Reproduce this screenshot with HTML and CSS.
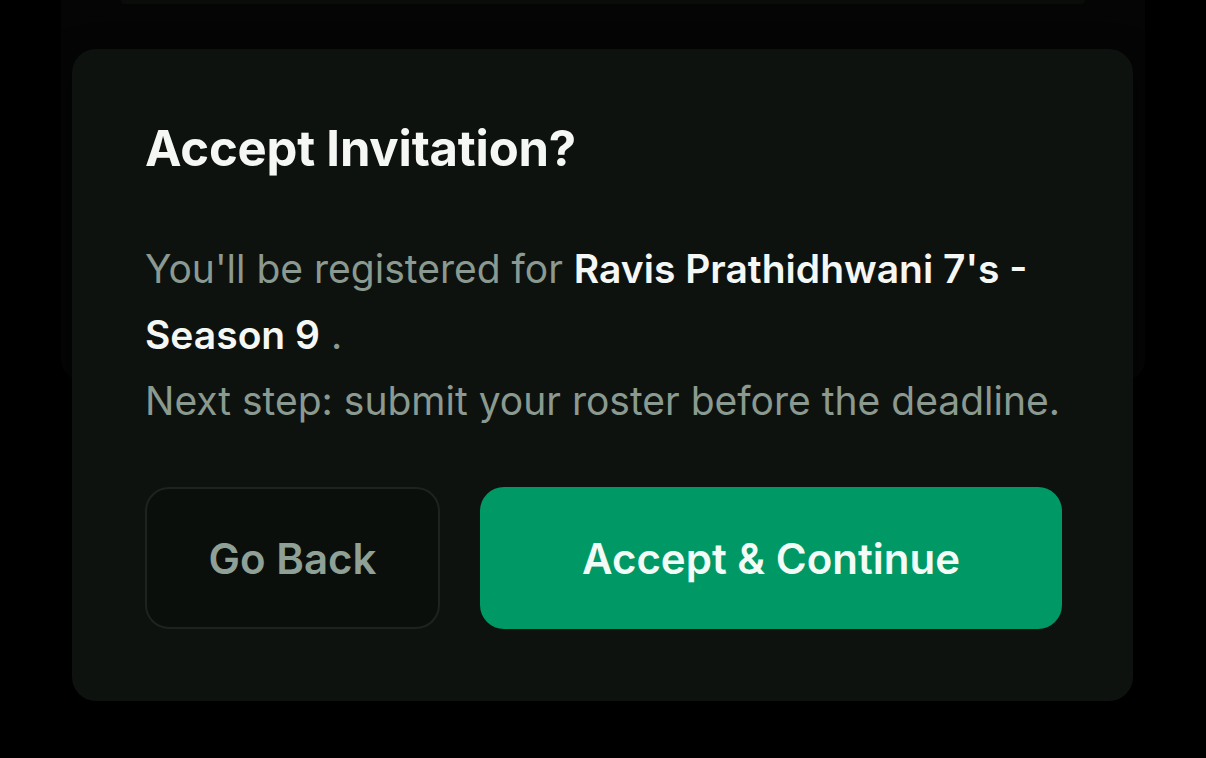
FILE: index.html
```html
<!DOCTYPE html>
<html lang="en">
<head>
<meta charset="utf-8">
<title>Accept Invitation</title>
<link rel="stylesheet" href="styles.css">
</head>
<body>
<div class="backdrop">
  <div class="bg-panel">
    <div class="bg-card"></div>
  </div>
</div>
<div class="overlay">
  <div class="modal" role="dialog" aria-labelledby="modal-title">
    <h2 class="modal-title" id="modal-title">Accept Invitation?</h2>
    <p class="modal-text first">You'll be registered for <strong class="hl">Ravis Prathidhwani 7's - Season 9</strong> .</p>
    <p class="modal-text">Next step: submit your roster before the deadline.</p>
    <div class="actions">
      <button class="btn btn-secondary" type="button">Go Back</button>
      <button class="btn btn-primary" type="button">Accept &amp; Continue</button>
    </div>
  </div>
</div>
</body>
</html>
```
FILE: styles.css
```css
* { box-sizing: border-box; }
html, body {
  margin: 0;
  padding: 0;
  width: 1206px;
  height: 758px;
  background: #000;
  overflow: hidden;
  font-family: Inter, "Noto Sans", sans-serif;
}
.backdrop {
  position: absolute;
  inset: 0;
  padding: 0 61px;
}
.bg-panel {
  height: 380px;
  background: #040504;
  border-radius: 0 0 20px 20px;
  padding: 0 60px;
}
.bg-card {
  height: 4px;
  background: #0a0c0a;
  border-radius: 0 0 12px 12px;
}
.overlay {
  position: absolute;
  inset: 0;
  padding: 49px 73px 0 72px;
}
.modal {
  background: #0e120f;
  border-radius: 24px;
  padding: 72px 71px 72px 73px;
  height: 652px;
  box-shadow: 0 8px 30px rgba(0,0,0,0.6);
}
.modal-title {
  margin: 0;
  color: #f5f7f5;
  font-size: 49px;
  font-weight: 700;
  line-height: 56px;
  letter-spacing: -0.2px;
}
.modal-text {
  margin: 0;
  color: #8a9a90;
  font-size: 39px;
  line-height: 66px;
  font-weight: 400;
}
.modal-text.first { margin-top: 59px; }
.hl {
  color: #f5f7f5;
  font-weight: 600;
}
.actions {
  display: flex;
  gap: 40px;
  margin-top: 53px;
}
.btn {
  height: 142px;
  border-radius: 24px;
  font-family: Inter, "Noto Sans", sans-serif;
  font-size: 42px;
  font-weight: 600;
  cursor: pointer;
  padding: 0;
}
.btn-secondary {
  width: 295px;
  background: #0b0f0c;
  border: 2px solid #1d231e;
  color: #8fa096;
}
.btn-primary {
  flex: 1;
  background: #009966;
  border: none;
  color: #f2fbf6;
}
```
